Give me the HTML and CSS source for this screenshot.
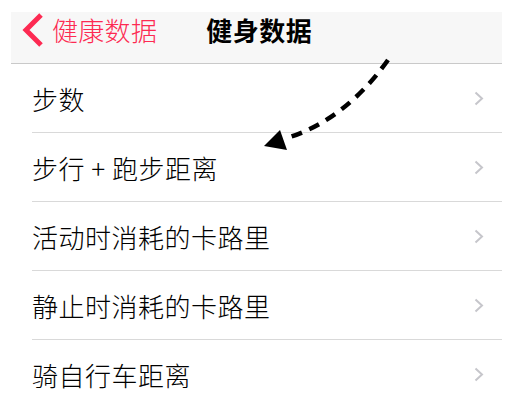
FILE: index.html
```html
<!DOCTYPE html>
<html lang="zh-CN">
<head>
    <meta charset="UTF-8">
    <meta name="viewport" content="width=device-width, initial-scale=1.0">
    <title>健身数据</title>
    <link rel="stylesheet" href="styles.css">
</head>
<body>
    <div class="screen">
        <div class="navbar">
            <a class="nav-back" href="#">
                <svg class="back-icon" width="22" height="34" viewBox="0 0 22 34">
                    <polyline points="19,2 4,17 19,32" fill="none" stroke="#fd2a52" stroke-width="5"/>
                </svg>
                <span>健康数据</span>
            </a>
            <div class="nav-title">健身数据</div>
        </div>

        <ul class="list">
            <li class="row"><span>步数</span><svg class="chev" width="10" height="15" viewBox="0 0 10 15"><polyline points="1.5,1.5 8,7.5 1.5,13.5" fill="none" stroke="#c6c6cb" stroke-width="2"/></svg></li>
            <li class="row"><span>步行 + 跑步距离</span><svg class="chev" width="10" height="15" viewBox="0 0 10 15"><polyline points="1.5,1.5 8,7.5 1.5,13.5" fill="none" stroke="#c6c6cb" stroke-width="2"/></svg></li>
            <li class="row"><span>活动时消耗的卡路里</span><svg class="chev" width="10" height="15" viewBox="0 0 10 15"><polyline points="1.5,1.5 8,7.5 1.5,13.5" fill="none" stroke="#c6c6cb" stroke-width="2"/></svg></li>
            <li class="row"><span>静止时消耗的卡路里</span><svg class="chev" width="10" height="15" viewBox="0 0 10 15"><polyline points="1.5,1.5 8,7.5 1.5,13.5" fill="none" stroke="#c6c6cb" stroke-width="2"/></svg></li>
            <li class="row"><span>骑自行车距离</span><svg class="chev" width="10" height="15" viewBox="0 0 10 15"><polyline points="1.5,1.5 8,7.5 1.5,13.5" fill="none" stroke="#c6c6cb" stroke-width="2"/></svg></li>
        </ul>

        <!-- 标注箭头 -->
        <svg class="arrow" width="508" height="402" viewBox="0 0 508 402">
            <path d="M388,60 Q345,120 287,138" fill="none" stroke="#000" stroke-width="4.5" stroke-dasharray="11,8"/>
            <polygon points="264,146 280,130 287,150" fill="#000"/>
        </svg>
    </div>
</body>
</html>
```

FILE: styles.css
```css
body {
    margin: 0;
    padding: 0;
    background: #fff;
    font-family: "Noto Sans CJK SC", "Noto Sans", sans-serif;
    color: #000;
    overflow: hidden;
}

.screen {
    position: relative;
    width: 491px;
    margin: 12px 0 0 11px;
}

.navbar {
    display: flex;
    align-items: center;
    height: 35px;
    padding: 0 0 16px 11px;
    background: #f7f7f7;
    border-bottom: 1px solid #c9c9c9;
}

.nav-back {
    display: flex;
    align-items: center;
    color: #fd2a52;
    text-decoration: none;
    font-size: 26px;
    font-weight: 300;
    letter-spacing: 0.3px;
}

.back-icon {
    margin-right: 8px;
}

.nav-title {
    margin-left: 49px;
    font-size: 26px;
    font-weight: bold;
    letter-spacing: 0.5px;
}

.list {
    list-style: none;
    margin: 0;
    padding: 0 0 0 21px;
}

.row {
    display: flex;
    align-items: center;
    justify-content: space-between;
    height: 68px;
    padding-right: 18px;
    font-size: 26px;
    font-weight: 300;
    letter-spacing: 0.5px;
    border-bottom: 1px solid #d9d9d9;
}

.chev {
    display: block;
}

.arrow {
    position: absolute;
    left: -11px;
    top: -12px;
    pointer-events: none;
}
```
